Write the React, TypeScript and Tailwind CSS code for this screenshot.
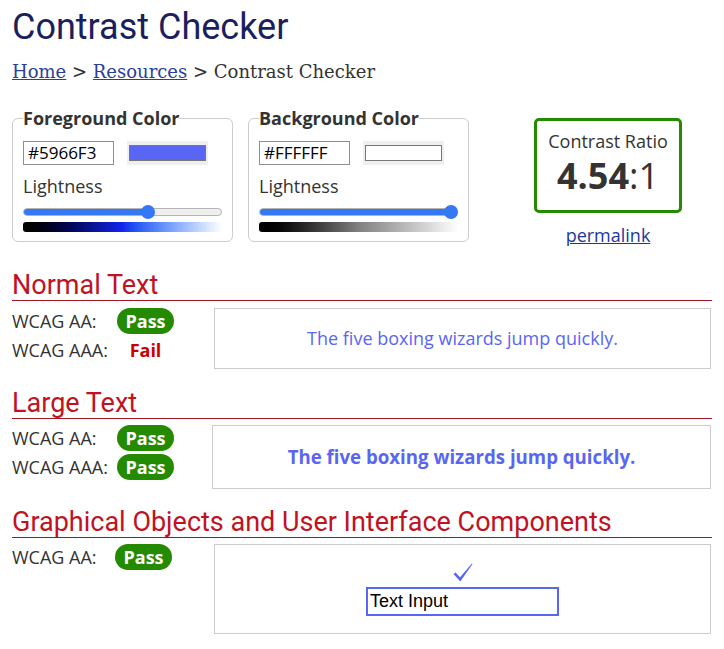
import * as React from 'react'

const body = "font-['Open_Sans',sans-serif]"
const heading = "m-0 font-['Roboto',sans-serif] text-[27px] leading-[30px] font-normal text-[#c1121f] border-b border-[#a4161f]"

function Badge({ ok }: { ok: boolean }) {
  if (!ok) {
    return <span className="flex w-[57px] justify-center text-[18px] font-bold text-[#cc0000]">Fail</span>
  }
  return (
    <span className="flex h-[26px] w-[57px] items-center justify-center rounded-full bg-[#248a00] text-[18px] font-bold text-white">
      Pass
    </span>
  )
}

function Row({ label, ok, labelW = 'w-[105px]' }: { label: string; ok: boolean; labelW?: string }) {
  return (
    <div className="flex h-[26px] items-center">
      <span className={`${labelW} text-[18px] text-[#333]`}>{label}</span>
      <Badge ok={ok} />
    </div>
  )
}

function ColorPanel({
  title,
  hex,
  swatch,
  lightness,
  gradient,
}: {
  title: string
  hex: string
  swatch: string
  lightness: number
  gradient: string
}) {
  return (
    <fieldset className="m-0 w-[221px] rounded-md border border-[#ccc] px-[10px] pb-[9px]">
      <legend className="px-0 text-[18px] leading-[24px] font-bold text-[#333]">{title}</legend>
      <div className="mt-[11px] flex h-[24px] items-center gap-[13px]">
        <input
          readOnly
          value={hex}
          className="h-[24px] w-[91px] border border-[#8f8f8f] bg-white px-[4px] text-[17px] text-black outline-none"
        />
        <div className="flex h-[24px] w-[81px] items-center justify-center bg-[#efefef] px-[2px] py-[4px]">
          <div className={`h-[16px] w-full border border-[#777] ${swatch}`} />
        </div>
      </div>
      <div className="mt-[9px] text-[18px] leading-[24px] text-[#333]">Lightness</div>
      <div className="relative mt-[7px] flex h-[14px] items-center">
        <div className="h-[8px] w-full overflow-hidden rounded-full border border-[#b5b5b5] bg-[#efefef]">
          <div className="h-full bg-[#3478f6]" style={{ width: `${lightness}%` }} />
        </div>
        <div
          className="absolute top-0 h-[14px] w-[14px] -translate-x-1/2 rounded-full bg-[#3478f6]"
          style={{ left: `calc(7px + (100% - 14px) * ${lightness / 100})` }}
        />
      </div>
      <div className={`mt-[3px] h-[10px] w-full rounded-l-[3px] ${gradient}`} />
    </fieldset>
  )
}

export default function App() {
  return (
    <div className={`${body} min-h-[649px] w-[724px] bg-white px-3 text-[#333]`}>
      <h1 className="m-0 pt-[7px] font-['Roboto',sans-serif] text-[36px] leading-[41px] font-normal text-[#1b1f5e]">
        Contrast Checker
      </h1>
      <div className="mt-[12px] font-['DejaVu_Serif',serif] text-[18px] leading-[24px] text-[#333]">
        <a href="#" className="text-[#2a3f9a] underline">Home</a> &gt;{' '}
        <a href="#" className="text-[#2a3f9a] underline">Resources</a> &gt; Contrast Checker
      </div>

      <div className="mt-[22px] flex items-start">
        <ColorPanel
          title="Foreground Color"
          hex="#5966F3"
          swatch="bg-[#5966F3]"
          lightness={64}
          gradient="bg-linear-to-r from-black via-[#1424ee] to-white"
        />
        <div className="ml-[15px]">
          <ColorPanel
            title="Background Color"
            hex="#FFFFFF"
            swatch="bg-white"
            lightness={100}
            gradient="bg-linear-to-r from-black via-[#808080] to-white"
          />
        </div>
        <div className="ml-[65px] mt-[12px] flex w-[148px] flex-col items-center">
          <div className="flex w-full flex-col items-center rounded-[5px] border-[3px] border-[#248a00] pt-[8px] pb-[12px]">
            <div className="text-[18px] leading-[24px] text-[#333]">Contrast Ratio</div>
            <div className="text-[36px] leading-[45px] text-[#333]">
              <span className="font-bold">4.54</span>:1
            </div>
          </div>
          <a href="#" className="mt-[10px] text-[18px] leading-[24px] text-[#1a3a9a] underline">
            permalink
          </a>
        </div>
      </div>

      <h2 className={`${heading} mt-[23px]`}>Normal Text</h2>
      <div className="mt-[7px] flex">
        <div className="flex w-[202px] flex-col gap-[3px]">
          <Row label="WCAG AA:" ok />
          <Row label="WCAG AAA:" ok={false} />
        </div>
        <div className="mr-[1px] flex h-[61px] flex-1 items-center justify-center border border-[#ccc] text-[18px] text-[#5966F3]">
          The five boxing wizards jump quickly.
        </div>
      </div>

      <h2 className={`${heading} mt-[19px]`}>Large Text</h2>
      <div className="mt-[6px] flex">
        <div className="flex w-[200px] flex-col gap-[3px]">
          <Row label="WCAG AA:" ok />
          <Row label="WCAG AAA:" ok />
        </div>
        <div className="mr-[1px] flex h-[64px] flex-1 items-center justify-center border border-[#ccc] text-[18.66px] font-bold text-[#5966F3]">
          The five boxing wizards jump quickly.
        </div>
      </div>

      <h2 className={`${heading} mt-[18px]`}>Graphical Objects and User Interface Components</h2>
      <div className="mt-[6px] flex">
        <div className="flex w-[202px] flex-col">
          <Row label="WCAG AA:" ok labelW="w-[103px]" />
        </div>
        <div className="mr-[1px] flex h-[90px] flex-1 flex-col items-center justify-center border border-[#ccc]">
          <svg width="20" height="19" viewBox="0 0 20 19" aria-hidden="true">
            <path d="M0.5 11 L2.6 9.6 L7 14.2 L18.9 0.4 L19.5 1 L7.3 18.5 Z" fill="#5966F3" />
          </svg>
          <div className="mt-[5px] flex h-[29px] w-[193px] items-center border-2 border-[#5966F3] px-[2px] font-['Liberation_Sans',Arial,sans-serif] text-[18px] text-black">
            Text Input
          </div>
        </div>
      </div>
    </div>
  )
}
